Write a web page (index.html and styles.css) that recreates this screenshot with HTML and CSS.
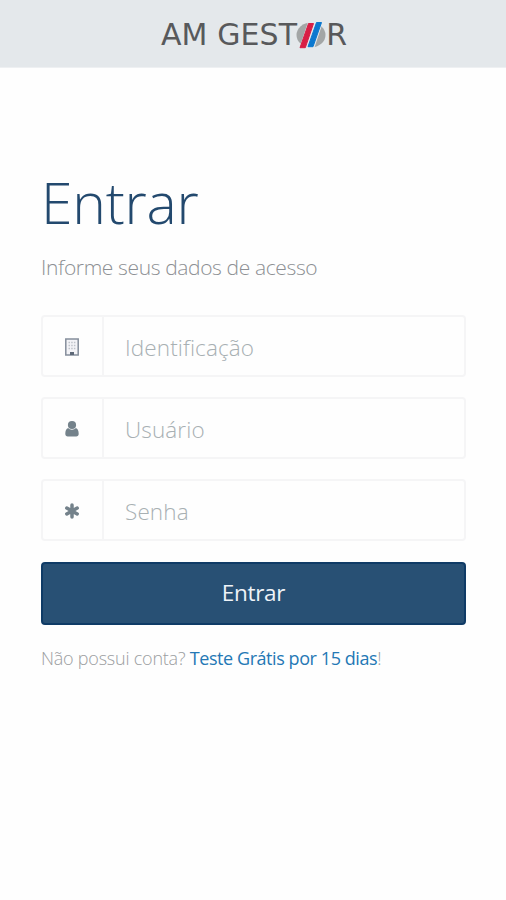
FILE: index.html
```html
<!DOCTYPE html>
<html lang="pt-BR">
<head>
<meta charset="utf-8">
<meta name="viewport" content="width=device-width, initial-scale=1">
<title>AM Gestor</title>
<link rel="stylesheet" href="styles.css">
</head>
<body>
<header class="topbar">
  <div class="logo">
    <span class="logo-text">AM GEST</span>
    <svg class="logo-mark" viewBox="0 0 30 30" aria-hidden="true">
      <ellipse cx="15" cy="15" rx="14.500" ry="12.500" fill="#a3a6a6"/>
      <path d="M12.500 2h14L17.500 29h-14z" fill="#e4e8eb" stroke="#e4e8eb" stroke-width="1"/>
      <path d="M12.500 3.500h5L9.300 27.700H4z" fill="#d81f45" stroke="#d81f45" stroke-linejoin="round"/>
      <path d="M20.500 2.500h5L17 26.700h-5z" fill="#0b78cf" stroke="#0b78cf" stroke-linejoin="round"/>
    </svg>
    <span class="logo-text">R</span>
  </div>
</header>
<main class="login">
  <h1 class="title">Entrar</h1>
  <p class="subtitle">Informe seus dados de acesso</p>
  <form class="form">
    <label class="field">
      <span class="addon">
        <svg class="icon" viewBox="0 0 16 18" aria-hidden="true">
          <path d="M1.800 1h12.400v16H1.800z" fill="#f3f3f7" stroke="#858e9c" stroke-width="1.500"/>
          <path d="M4.500 4.500h7M4.500 7.500h7M4.500 10.500h7" stroke="#bfc3ca" stroke-width="1.300" stroke-dasharray="1.500 1.200"/>
          <path d="M6 14h4v3H6z" fill="#5d6877"/>
        </svg>
      </span>
      <input class="input" type="text" placeholder="Identificação">
    </label>
    <label class="field">
      <span class="addon">
        <svg class="icon" viewBox="0 0 16 18" aria-hidden="true">
          <circle cx="8" cy="5" r="4.100" fill="#74828b"/>
          <path d="M4.200 8c1 1.100 2.200 1.700 3.800 1.700s2.800-.6 3.800-1.700c2 .6 2.900 2.800 2.900 5.800 0 1.700-1 2.700-2.500 2.700H3.800c-1.500 0-2.500-1-2.500-2.700 0-3 .9-5.200 2.900-5.800z" fill="#74828b"/>
        </svg>
      </span>
      <input class="input" type="text" placeholder="Usuário">
    </label>
    <label class="field">
      <span class="addon">
        <svg class="icon" viewBox="0 0 16 18" aria-hidden="true">
          <path d="M8 3v12M2.800 6l10.400 6M13.200 6L2.800 12" stroke="#74828b" stroke-width="3.500" stroke-linecap="round"/>
        </svg>
      </span>
      <input class="input" type="password" placeholder="Senha">
    </label>
    <button class="submit" type="button">Entrar</button>
  </form>
  <p class="signup">Não possui conta? <a class="link" href="#">Teste Grátis por 15 dias</a>!</p>
</main>
</body>
</html>
```

FILE: styles.css
```css
* {
  box-sizing: border-box;
}

body {
  margin: 0;
  min-height: 900px;
  background: #fefefe;
  font-family: "Open Sans", "Noto Sans", sans-serif;
  font-weight: 300;
}

.topbar {
  display: flex;
  justify-content: center;
  height: 68px;
  padding: 18px 0 0 2px;
  background: #e4e8eb;
  border-bottom: 1px solid #eef0f2;
}

.logo {
  display: flex;
  align-items: center;
  height: 34px;
}

.logo-text {
  font: 400 30px/34px "DejaVu Sans", sans-serif;
  letter-spacing: 0.100px;
  color: #58595b;
}

.logo-mark {
  width: 30px;
  height: 30px;
  margin: 0 0 0 -1px;
}

.login {
  padding: 103px 40px 0 41px;
}

.title {
  margin: 0;
  font-size: 57px;
  font-weight: 300;
  line-height: 62px;
  letter-spacing: -0.200px;
  color: #23496e;
}

.subtitle {
  margin: 19px 0 0;
  font-size: 21px;
  line-height: 30px;
  letter-spacing: -0.370px;
  color: #8d9094;
}

.form {
  display: flex;
  flex-direction: column;
  gap: 20px;
  margin-top: 33px;
}

.field {
  display: flex;
  height: 62px;
  border: 2px solid #f5f5f6;
  border-radius: 4px;
}

.addon {
  display: flex;
  align-items: center;
  justify-content: center;
  width: 61px;
  padding: 2px 1px 0 0;
  border-right: 2px solid #f5f5f6;
}

.icon {
  width: 16px;
  height: 18px;
  fill: none;
}

.input {
  flex: 1;
  min-width: 0;
  padding: 3px 21px 0;
  border: 0;
  outline: 0;
  background: transparent;
  font: 300 22.500px/30px "Open Sans", sans-serif;
  letter-spacing: 0.120px;
  color: #555;
}

.input::placeholder {
  color: #a8b0b3;
  opacity: 1;
}

.submit {
  height: 63px;
  margin-top: 1px;
  padding: 0 0 2px;
  border: 2px solid #0f3b66;
  border-radius: 4px;
  background: #285074;
  font: 400 22.500px/30px "Open Sans", sans-serif;
  letter-spacing: -0.300px;
  color: #eef3f8;
}

.signup {
  margin: 20px 0 0;
  font-size: 18px;
  line-height: 26px;
  letter-spacing: -0.220px;
  color: #9b9da0;
}

.link {
  font-weight: 400;
  letter-spacing: -0.430px;
  color: #2478b5;
  text-decoration: none;
}
```
